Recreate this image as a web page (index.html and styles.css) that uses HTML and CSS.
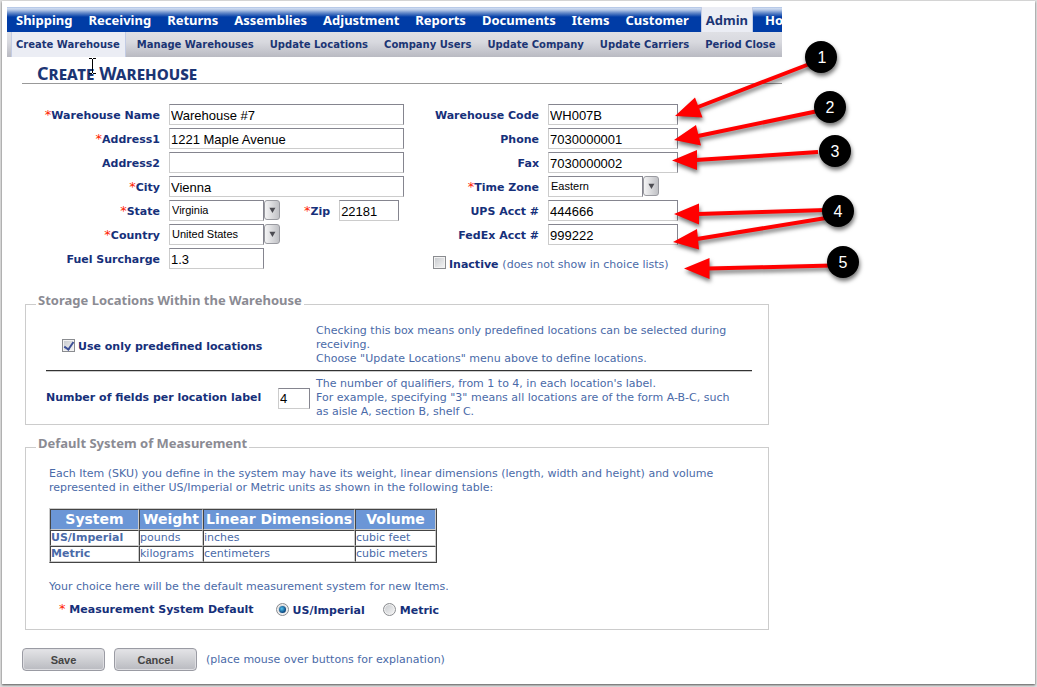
FILE: index.html
```html
<!DOCTYPE html>
<html lang="en">
<head>
<meta charset="utf-8">
<title>Create Warehouse</title>
<link rel="stylesheet" href="styles.css">
</head>
<body>
<div class="frame">
  <div class="app">
    <nav class="tabs" aria-label="Main">
      <a href="#">Shipping</a><a href="#">Receiving</a><a href="#">Returns</a><a href="#">Assemblies</a><a href="#">Adjustment</a><a href="#">Reports</a><a href="#">Documents</a><a href="#">Items</a><a href="#">Customer</a><a href="#" class="active">Admin</a><a href="#">Ho</a>
    </nav>
    <nav class="subtabs" aria-label="Admin">
      <a href="#" class="active">Create Warehouse</a><a href="#">Manage Warehouses</a><a href="#">Update Locations</a><a href="#">Company Users</a><a href="#">Update Company</a><a href="#">Update Carriers</a><a href="#">Period Close</a>
    </nav>
    <main class="content">
      <h1>Create Warehouse</h1>
      <form>
        <div class="columns">
          <div class="fields">
            <label for="name"><i>*</i>Warehouse Name</label><input id="name" type="text" value="Warehouse #7">
            <label for="addr1"><i>*</i>Address1</label><input id="addr1" type="text" value="1221 Maple Avenue">
            <label for="addr2">Address2</label><input id="addr2" type="text">
            <label for="city"><i>*</i>City</label><input id="city" type="text" value="Vienna">
            <label for="state"><i>*</i>State</label>
            <div class="pair">
              <span class="combo"><select id="state"><option>Virginia</option></select><svg viewBox="0 0 16 21"><path d="M5 8h7l-3.500 6z"/></svg></span>
              <span class="zip"><label for="zip"><i>*</i>Zip</label><input id="zip" type="text" value="22181"></span>
            </div>
            <label for="country"><i>*</i>Country</label>
            <span class="combo"><select id="country"><option>United States</option></select><svg viewBox="0 0 16 21"><path d="M5 8h7l-3.500 6z"/></svg></span>
            <label for="fuel">Fuel Surcharge</label><input id="fuel" class="short" type="text" value="1.3">
          </div>
          <div class="fields right">
            <label for="code">Warehouse Code</label><input id="code" type="text" value="WH007B">
            <label for="phone">Phone</label><input id="phone" type="text" value="7030000001">
            <label for="fax">Fax</label><input id="fax" type="text" value="7030000002">
            <label for="tz"><i>*</i>Time Zone</label>
            <span class="combo"><select id="tz"><option>Eastern</option></select><svg viewBox="0 0 16 21"><path d="M5 8h7l-3.500 6z"/></svg></span>
            <label for="ups">UPS Acct #</label><input id="ups" type="text" value="444666">
            <label for="fedex">FedEx Acct #</label><input id="fedex" type="text" value="999222">
            <div class="inactive"><input id="inactive" type="checkbox"><label for="inactive">Inactive <span class="note">(does not show in choice lists)</span></label></div>
          </div>
        </div>

        <fieldset class="storage">
          <legend>Storage Locations Within the Warehouse</legend>
          <div class="row">
            <div class="check"><input id="predef" type="checkbox" checked><label for="predef">Use only predefined locations</label></div>
            <p>Checking this box means only predefined locations can be selected during receiving.<br>Choose "Update Locations" menu above to define locations.</p>
          </div>
          <hr>
          <div class="row">
            <div class="count"><label for="count">Number of fields per location label</label><input id="count" type="text" value="4"></div>
            <p>The number of qualifiers, from 1 to 4, in each location's label.<br>For example, specifying "3" means all locations are of the form A-B-C, such as aisle A, section B, shelf C.</p>
          </div>
        </fieldset>

        <fieldset class="measure">
          <legend>Default System of Measurement</legend>
          <p>Each Item (SKU) you define in the system may have its weight, linear dimensions (length, width and height) and volume represented in either US/Imperial or Metric units as shown in the following table:</p>
          <table>
            <thead><tr><th class="c1">System</th><th class="c2">Weight</th><th class="c3">Linear Dimensions</th><th class="c4">Volume</th></tr></thead>
            <tbody>
              <tr><td><b>US/Imperial</b></td><td>pounds</td><td>inches</td><td>cubic feet</td></tr>
              <tr><td><b>Metric</b></td><td>kilograms</td><td>centimeters</td><td>cubic meters</td></tr>
            </tbody>
          </table>
          <p>Your choice here will be the default measurement system for new Items.</p>
          <div class="radios" role="radiogroup" aria-labelledby="msd">
            <span id="msd"><i>*</i> Measurement System Default</span>
            <input id="us" type="radio" name="system" checked><label for="us">US/Imperial</label>
            <input id="metric" type="radio" name="system"><label for="metric">Metric</label>
          </div>
        </fieldset>

        <div class="actions">
          <button type="button">Save</button><button type="button">Cancel</button>
          <span class="note">(place mouse over buttons for explanation)</span>
        </div>
      </form>
    </main>
  </div>

  <svg class="callouts" width="900" height="300" viewBox="0 0 900 300">
    <g class="arrows">
      <path d="M698 107L812 63M698 136L818 111M696 160L818 152M698 214L826 210M697 239L826 218M708 268.500L832 265.500"/>
      <path class="head" d="M675 116L695 97.500L702.500 117.500zM674 140L696 125L701 145.500zM672 160.500L697 150L697 170zM674 214L699 203.500L699 224.500zM673 242L697 229L699 249.500zM684 268.500L709.500 258L709.500 279z"/>
    </g>
    <g class="badges">
      <circle cx="821" cy="57" r="16"/><circle cx="830" cy="107" r="16"/><circle cx="835" cy="151" r="16"/><circle cx="838" cy="211" r="16"/><circle cx="843" cy="262" r="16"/>
    </g>
    <g class="nums">
      <text x="822" y="63">1</text><text x="830" y="113">2</text><text x="835" y="157">3</text><text x="838" y="217">4</text><text x="843" y="268">5</text>
    </g>
    <path class="cursor" d="M89 58.500h3M93 58.500h3M92.500 59v14M89 73.500h3M93 73.500h3"/>
  </svg>
</div>
</body>
</html>
```
FILE: styles.css
```css
* { box-sizing: border-box; }
body {
  margin: 0;
  padding: 1px 2px 3px;
  background: #dedede;
  font: 11px/14px "DejaVu Sans", Verdana, sans-serif;
  color: #4a6aa8;
}
.frame {
  position: relative;
  min-height: calc(100vh - 4px);
  padding: 6px 5px 12px;
  background: #fff;
  box-shadow: 0 1px 2px #555;
}
.app { max-width: 775px; }
a { text-decoration: none; white-space: nowrap; }
i { font-style: normal; font-weight: normal; font-size: 13px; line-height: 10px; color: #f20; }
p { margin: 0; }
label, #msd { font-weight: bold; color: #16307a; white-space: nowrap; }
.note { font-weight: normal; color: #4a6aa8; }

.tabs {
  display: flex;
  height: 25px;
  padding-left: 1px;
  overflow: hidden;
  background: linear-gradient(#9db5de 0, #d3dff2 1px, #b5c8e8 3px, #6288c8 6px, #003ca6 10px);
  font: bold 13px/27px "Noto Sans", Tahoma, sans-serif;
}
.tabs a { padding: 0 8px; color: #fff; }
.tabs .active {
  margin: 0 4px;
  padding: 0 4px;
  background: #ebedf4;
  border-left: 1px solid #c3cce4;
  border-right: 1px solid #c3cce4;
  color: #1b3574;
}
.subtabs {
  display: flex;
  height: 25px;
  padding-left: 4px;
  overflow: hidden;
  background: linear-gradient(#dfe0e5, #d8d9df 40%, #b9bac2);
  font-weight: bold;
  font-size: 10px;
  line-height: 25px;
}
.subtabs a { padding: 0 8px; color: #1b3574; }
.subtabs .active {
  margin-right: 3px;
  padding: 0 5px 0 4px;
  background: #ebedf4;
  border-left: 1px solid #c3cce4;
  border-right: 1px solid #c3cce4;
}

.content { padding-left: 15px; }
h1 {
  margin: 0;
  padding: 7px 15px 0;
  border-bottom: 1px solid #999;
  font: bold small-caps 18px/19px "Noto Sans", Tahoma, sans-serif;
  color: #1b3574;
}

.columns { display: flex; gap: 21px; padding-top: 20px; }
.fields {
  display: grid;
  grid-template-columns: 138px 235px;
  grid-auto-rows: 21px;
  column-gap: 9px;
  row-gap: 3px;
  align-items: center;
}
.fields.right { grid-template-columns: 114px 130px; }
.fields > label { padding-top: 2px; text-align: right; }
input[type="text"], select {
  width: 100%;
  height: 21px;
  margin: 0;
  padding: 1px 1px 0;
  border: 1px solid;
  border-color: #85858f #85858f #ccc #ccc;
  border-radius: 0;
  background: #fff;
  color: #000;
  font: 13px/18px "Liberation Sans", Arial, sans-serif;
}
select { appearance: none; width: 95px; font-size: 11px; line-height: 17px; padding: 0 2px; }
.fields .short { width: 95px; }
.combo { display: flex; }
.combo svg {
  width: 16px;
  height: 20px;
  border: 1px solid #999aa0;
  border-radius: 3px;
  background: linear-gradient(90deg, #f4f4f5, #c0c1c5);
  fill: #4c4c52;
}
.pair { display: flex; gap: 24px; }
.zip { display: flex; align-items: center; gap: 9px; }
.zip label { padding-top: 2px; }
.zip input { width: 60px; }
.inactive { grid-column: 1 / -1; display: flex; align-items: center; gap: 3px; padding: 8px 0 0 8px; white-space: nowrap; }
.inactive label, .check label { padding-top: 4px; }

input[type="checkbox"], input[type="radio"] {
  appearance: none;
  flex: none;
  display: grid;
  place-items: center;
  width: 13px;
  height: 13px;
  margin: 0;
  border: 1px solid #8a8c90;
  background: linear-gradient(135deg, #c5c8cc, #f6f6f6);
  box-shadow: inset 0 0 0 1px #f2f2f2;
}
input[type="checkbox"]:checked::after {
  content: "";
  width: 4px;
  height: 8px;
  border: solid #3c4f96;
  border-width: 0 2px 2px 0;
  transform: rotate(35deg);
}
input[type="radio"] { border-radius: 50%; }
input[type="radio"]:checked::after {
  content: "";
  width: 7px;
  height: 7px;
  border-radius: 50%;
  background: radial-gradient(circle at 40% 40%, #55c4ee, #0b4a84 65%, #10284a);
}

fieldset { min-width: 0; margin: 0 13px 0 3px; border: 1px solid #ccc; }
legend {
  margin-left: -10px;
  padding: 0 2px 8px;
  font: bold 13px/16px "Noto Sans", Tahoma, sans-serif;
  color: #8b8b93;
}
.storage { margin-top: 23px; padding: 8px 16px 5px 20px; }
.row { display: grid; grid-template-columns: 264px 1fr; column-gap: 6px; align-items: center; }
.row p { padding-right: 12px; }
.check { display: flex; align-items: center; gap: 3px; padding-left: 16px; }
.count { display: flex; align-items: center; justify-content: space-between; }
.count input { width: 32px; }
hr { height: 2px; margin: 4px 0 5px; border: 0; border-top: 1px solid #333; border-bottom: 1px solid #ccc; }

.measure { margin-top: 10px; padding: 8px 23px 11px; }
.measure legend { margin-left: -13px; }
table { margin: 13px 0 17px; border: 1px solid #444; border-color: #ccc #444 #444 #ccc; border-spacing: 0; line-height: 14px; }
th, td { padding: 0; border: 1px solid; border-color: #444 #ccc #ccc #444; text-align: left; }
th { background: #6b96d6; color: #fff; font-size: 14px; line-height: 19px; text-align: center; }
.c1 { width: 89px; }
.c2 { width: 64px; }
.c3 { width: 152px; }
.c4 { width: 81px; }
.radios { display: flex; align-items: center; padding: 7px 0 0 10px; }
#msd { margin-right: 22px; }
.radios label { margin: 0 18px 0 4px; padding-top: 3px; }

.actions { display: flex; align-items: center; gap: 9px; margin-top: 18px; }
button {
  width: 83px;
  height: 23px;
  padding: 0;
  border: 1px solid #9a9ba3;
  border-radius: 4px;
  background: linear-gradient(#e4e4e7, #cfd0d4 50%, #b9bac0);
  box-shadow: inset 0 0 0 1px #dedee2;
  font: bold 11px/20px "Liberation Sans", Arial, sans-serif;
  color: #444;
}

.callouts { position: absolute; left: -2px; top: -1px; pointer-events: none; }
.arrows, .badges { filter: drop-shadow(1px 3px 2px rgba(0, 0, 0, .55)); }
.arrows { fill: none; stroke: #f00; stroke-width: 4; }
.head { fill: #f00; stroke: none; }
.nums { fill: #fff; font: 16px "Liberation Sans", Arial, sans-serif; text-anchor: middle; }
.cursor { stroke: #000; fill: none; }
```
